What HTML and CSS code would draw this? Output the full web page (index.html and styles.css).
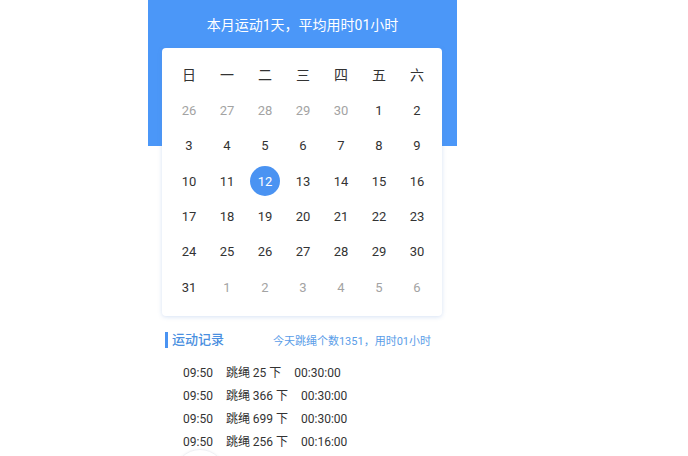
FILE: index.html
```html
<!DOCTYPE html>
<html>
<head>
<meta charset="utf-8">
<link rel="stylesheet" href="styles.css">
</head>
<body>
<div class="page">
  <div class="title">本月运动1天，平均用时01小时</div>
  <div class="card">
    <div class="grid">
      <div class="wk">日</div><div class="wk">一</div><div class="wk">二</div><div class="wk">三</div><div class="wk">四</div><div class="wk">五</div><div class="wk">六</div>
      <div class="d o">26</div><div class="d o">27</div><div class="d o">28</div><div class="d o">29</div><div class="d o">30</div><div class="d">1</div><div class="d">2</div>
      <div class="d">3</div><div class="d">4</div><div class="d">5</div><div class="d">6</div><div class="d">7</div><div class="d">8</div><div class="d">9</div>
      <div class="d">10</div><div class="d">11</div><div class="d"><span class="sel">12</span></div><div class="d">13</div><div class="d">14</div><div class="d">15</div><div class="d">16</div>
      <div class="d">17</div><div class="d">18</div><div class="d">19</div><div class="d">20</div><div class="d">21</div><div class="d">22</div><div class="d">23</div>
      <div class="d">24</div><div class="d">25</div><div class="d">26</div><div class="d">27</div><div class="d">28</div><div class="d">29</div><div class="d">30</div>
      <div class="d">31</div><div class="d o">1</div><div class="d o">2</div><div class="d o">3</div><div class="d o">4</div><div class="d o">5</div><div class="d o">6</div>
    </div>
  </div>
  <div class="sec">
    <div class="sec-title">运动记录</div>
    <div class="sec-sum">今天跳绳个数1351，用时01小时</div>
  </div>
  <div class="list">
    <div class="rec"><span>09:50</span><span>跳绳 25 下</span><span>00:30:00</span></div>
    <div class="rec"><span>09:50</span><span>跳绳 366 下</span><span>00:30:00</span></div>
    <div class="rec"><span>09:50</span><span>跳绳 699 下</span><span>00:30:00</span></div>
    <div class="rec"><span>09:50</span><span>跳绳 256 下</span><span>00:16:00</span></div>
  </div>
  <div class="fab"></div>
</div>
</body>
</html>
```
FILE: styles.css
```css
html, body {
  margin: 0;
  padding: 0;
  background: #fff;
  height: 456px;
  overflow: hidden;
}
body {
  font-family: "Roboto", "Noto Sans CJK SC", sans-serif;
  color: #333;
}
.page {
  width: 309px;
  margin-left: 148px;
  background: linear-gradient(#4b97f8 0, #4b97f8 146px, #fff 146px);
  position: relative;
  height: 456px;
  overflow: hidden;
}
.title {
  height: 48px;
  line-height: 51px;
  text-align: center;
  color: #fff;
  font-size: 14px;
}
.card {
  margin: 0 15px 0 14px;
  background: #fff;
  border-radius: 4px;
  box-shadow: 0 1px 4px rgba(90, 140, 210, 0.25);
  padding: 7px 6px 11px 8px;
}
.grid {
  display: grid;
  grid-template-columns: repeat(7, 38px);
  grid-template-rows: 38px;
  grid-auto-rows: 35.3px;
}
.wk, .d {
  display: flex;
  align-items: center;
  justify-content: center;
}
.wk {
  font-size: 14px;
  color: #333;
}
.d {
  font-size: 13px;
  color: #333;
}
.d.o {
  color: #a3a3a3;
}
.sel {
  width: 30px;
  height: 30px;
  border-radius: 50%;
  background: #4a93f2;
  color: #fff;
  display: flex;
  align-items: center;
  justify-content: center;
}
.sec {
  display: flex;
  align-items: center;
  justify-content: space-between;
  margin: 14px 26px 0 17px;
  height: 20px;
}
.sec-title {
  border-left: 3px solid #4a93f2;
  padding-left: 4px;
  font-size: 13px;
  line-height: 16px;
  color: #4a8fe0;
  font-weight: 500;
}
.sec-sum {
  font-size: 11px;
  color: #5a9de8;
}
.list {
  margin-top: 12px;
  padding-left: 35px;
}
.rec {
  height: 23px;
  line-height: 23px;
  font-size: 12px;
  color: #333;
  display: flex;
  gap: 13px;
}
.fab {
  position: absolute;
  left: 26px;
  top: 449px;
  width: 50px;
  height: 50px;
  border-radius: 50%;
  border: 1px solid #eef0f4;
  box-shadow: 0 0 3px rgba(0,0,0,0.05);
}
```
